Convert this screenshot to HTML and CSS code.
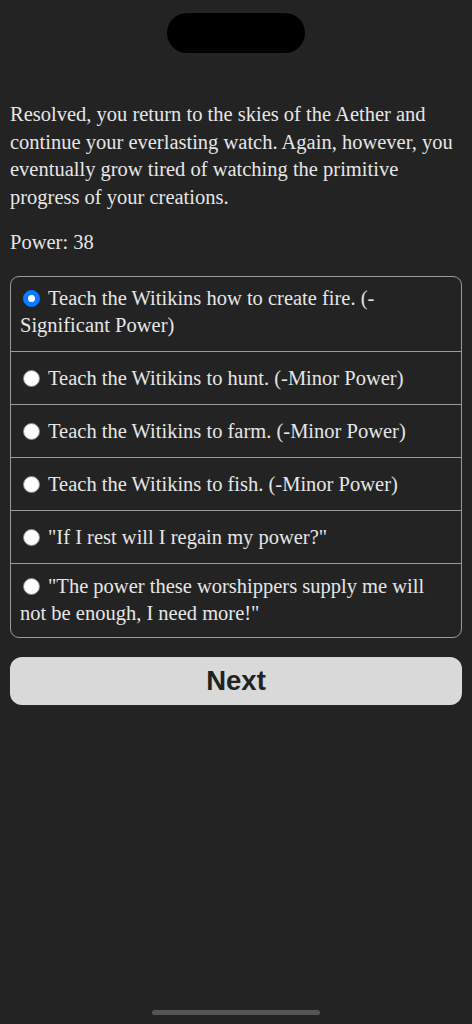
FILE: index.html
```html
<!DOCTYPE html>
<html>
<head>
<meta charset="utf-8">
<link rel="stylesheet" href="styles.css">
</head>
<body>
<div class="screen">
  <div class="island"></div>
  <main class="content">
    <p class="story">Resolved, you return to the skies of the Aether and continue your everlasting watch. Again, however, you eventually grow tired of watching the primitive progress of your creations.</p>
    <p class="power">Power: 38</p>
    <div class="options">
      <div class="option"><span class="radio checked"></span>Teach the Witikins how to create fire. (-Significant Power)</div>
      <div class="option"><span class="radio"></span>Teach the Witikins to hunt. (-Minor Power)</div>
      <div class="option"><span class="radio"></span>Teach the Witikins to farm. (-Minor Power)</div>
      <div class="option"><span class="radio"></span>Teach the Witikins to fish. (-Minor Power)</div>
      <div class="option"><span class="radio"></span>"If I rest will I regain my power?"</div>
      <div class="option"><span class="radio"></span>"The power these worshippers supply me will not be enough, I need more!"</div>
    </div>
    <button class="next">Next</button>
  </main>
  <div class="home"></div>
</div>
</body>
</html>
```
FILE: styles.css
```css
* { box-sizing: border-box; }
html, body { margin: 0; padding: 0; background: #232323; }
.screen {
  width: 472px;
  height: 1024px;
  display: flex;
  flex-direction: column;
  align-items: center;
  background: #232323;
  color: #e6e6e6;
  font-family: "Liberation Serif", "DejaVu Serif", serif;
}
.island {
  margin-top: 13px;
  width: 138px;
  height: 40px;
  border-radius: 20px;
  background: #000;
  flex: none;
}
.content {
  width: 100%;
  padding: 48px 10px 0;
  flex: 1;
}
.story {
  margin: 0;
  font-size: 20.5px;
  line-height: 27.5px;
}
.power {
  margin: 18px 0 0;
  font-size: 20.5px;
  line-height: 27.5px;
}
.options {
  margin-top: 19px;
  border: 1px solid #9a9a9a;
  border-radius: 9px;
  overflow: hidden;
}
.option {
  padding: 13px 9px 12px 9px;
  font-size: 20.5px;
  line-height: 27px;
  border-top: 1px solid #9a9a9a;
}
.option:first-child { border-top: none; padding-top: 8px; padding-bottom: 12px; }
.option:last-child { padding-top: 9px; padding-bottom: 10px; }
.radio {
  display: inline-block;
  width: 17px;
  height: 17px;
  border-radius: 50%;
  background: #fff;
  border: 1px solid #8a8a8a;
  margin: 0 8px 0 3px;
  vertical-align: -2px;
  position: relative;
}
.radio.checked {
  background: #0a7aff;
  border-color: #0a7aff;
}
.radio.checked::after {
  content: "";
  position: absolute;
  left: 4px;
  top: 4px;
  width: 7px;
  height: 7px;
  border-radius: 50%;
  background: #fff;
}
.next {
  display: block;
  width: 100%;
  margin-top: 19px;
  height: 48px;
  border: none;
  border-radius: 12px;
  background: #d9d9d9;
  color: #222;
  font-family: "Liberation Sans", Arial, sans-serif;
  font-weight: bold;
  font-size: 27.5px;
  padding: 0;
}
.home {
  width: 168px;
  height: 5px;
  border-radius: 3px;
  background: #555;
  margin-bottom: 9px;
  flex: none;
}
```
